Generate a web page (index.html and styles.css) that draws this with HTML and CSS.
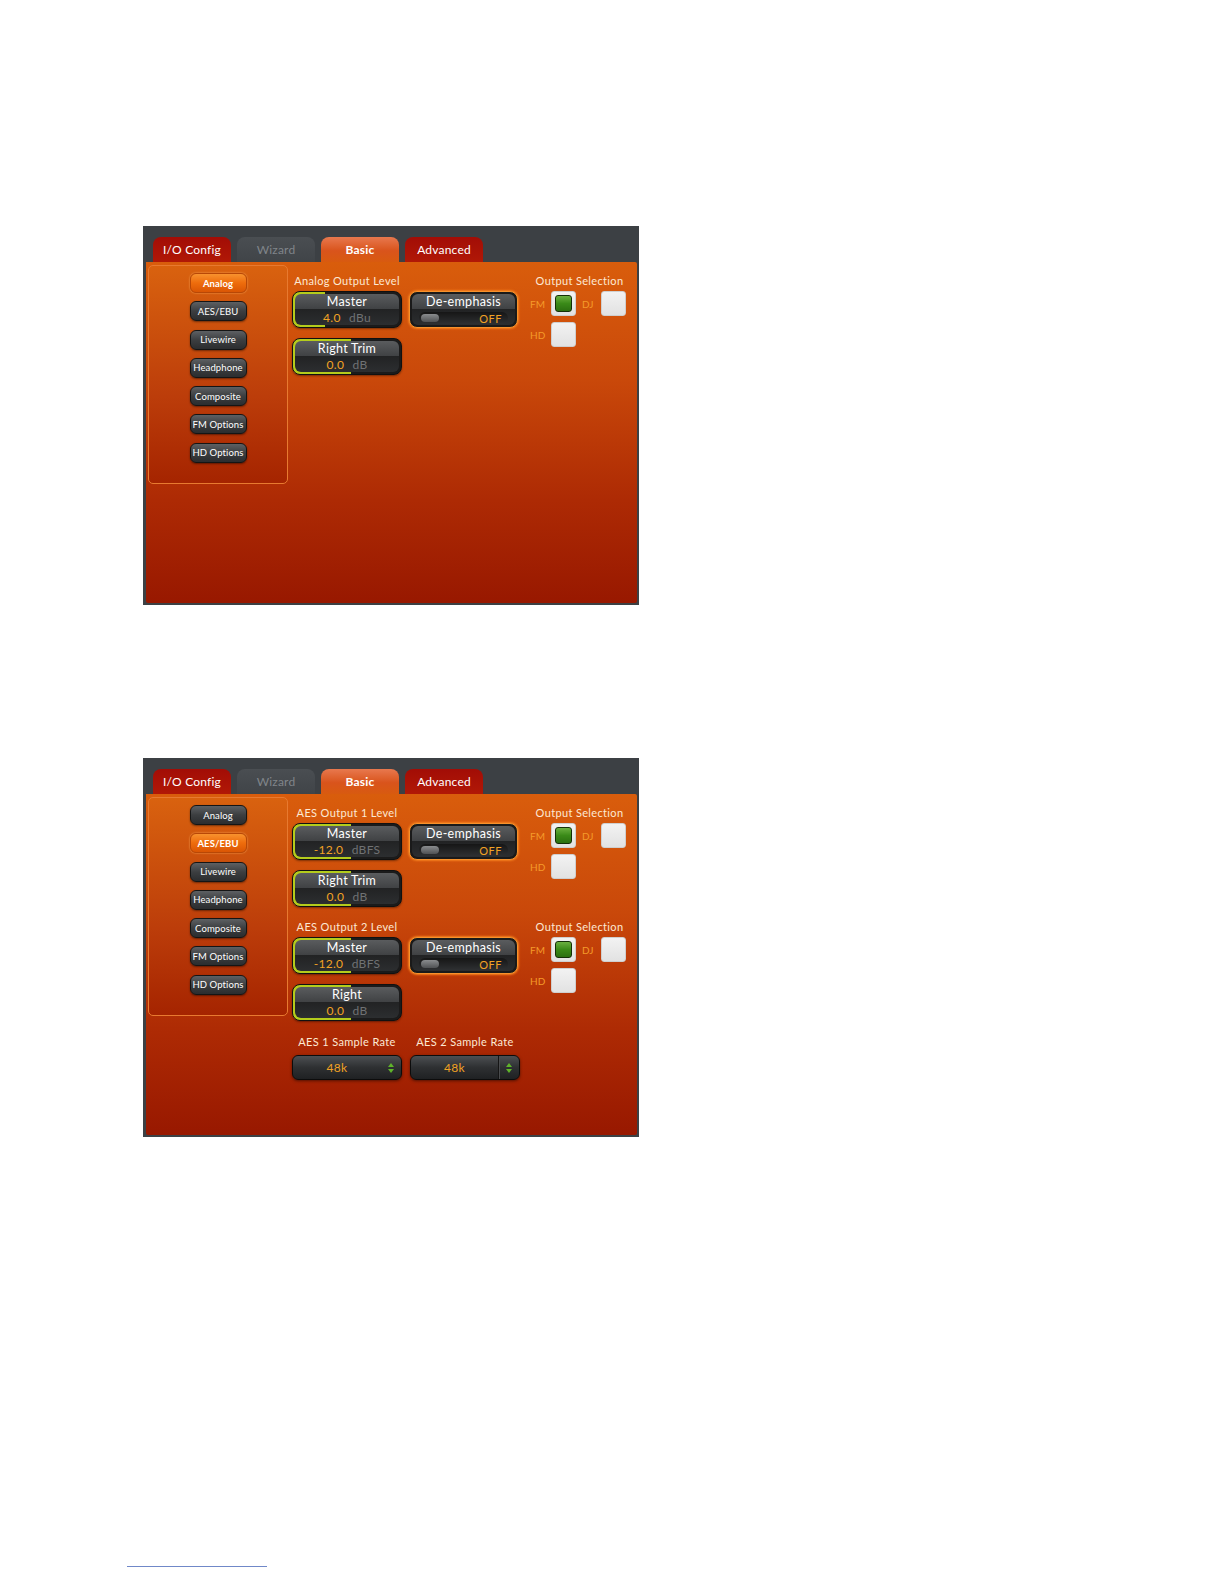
FILE: index.html
```html
<!DOCTYPE html>
<html lang="en">
<head>
    <meta charset="UTF-8">
    <title>Output Configuration</title>
    <link rel="stylesheet" href="styles.css">
</head>
<body>
    <div class="page">
        <!-- Analog output screen -->
        <div class="panel">
            <div class="tabs">
                <div class="tab">I/O Config</div>
                <div class="tab off">Wizard</div>
                <div class="tab active">Basic</div>
                <div class="tab">Advanced</div>
            </div>
            <div class="screen">
                <div class="nav">
                    <div class="nav-btn on">Analog</div>
                    <div class="nav-btn">AES/EBU</div>
                    <div class="nav-btn">Livewire</div>
                    <div class="nav-btn">Headphone</div>
                    <div class="nav-btn">Composite</div>
                    <div class="nav-btn">FM Options</div>
                    <div class="nav-btn">HD Options</div>
                </div>
                <div class="main">
                    <div class="group">
                        <div class="levels">
                            <div class="caption">Analog Output Level</div>
                            <div class="knob" style="--fill: 30%">
                                <div class="knob-in">
                                    <span class="knob-name">Master</span>
                                    <span class="knob-val"><b>4.0</b> dBu</span>
                                </div>
                            </div>
                            <div class="knob" style="--fill: 54%">
                                <div class="knob-in">
                                    <span class="knob-name">Right Trim</span>
                                    <span class="knob-val"><b>0.0</b> dB</span>
                                </div>
                            </div>
                        </div>
                        <div class="deemph">
                            <div class="deemph-in">
                                <span class="knob-name">De-emphasis</span>
                                <div class="toggle"><span class="toggle-knob"></span><span class="toggle-txt">OFF</span></div>
                            </div>
                        </div>
                        <div class="outsel">
                            <div class="caption">Output Selection</div>
                            <div class="outsel-grid">
                                <span class="ch">FM</span><span class="check on"><i></i></span>
                                <span class="ch dj">DJ</span><span class="check"></span>
                                <span class="ch">HD</span><span class="check"></span>
                            </div>
                        </div>
                    </div>
                </div>
            </div>
        </div>

        <!-- AES/EBU output screen -->
        <div class="panel">
            <div class="tabs">
                <div class="tab">I/O Config</div>
                <div class="tab off">Wizard</div>
                <div class="tab active">Basic</div>
                <div class="tab">Advanced</div>
            </div>
            <div class="screen">
                <div class="nav">
                    <div class="nav-btn">Analog</div>
                    <div class="nav-btn on">AES/EBU</div>
                    <div class="nav-btn">Livewire</div>
                    <div class="nav-btn">Headphone</div>
                    <div class="nav-btn">Composite</div>
                    <div class="nav-btn">FM Options</div>
                    <div class="nav-btn">HD Options</div>
                </div>
                <div class="main">
                    <div class="group">
                        <div class="levels">
                            <div class="caption">AES Output 1 Level</div>
                            <div class="knob" style="--fill: 54%">
                                <div class="knob-in">
                                    <span class="knob-name">Master</span>
                                    <span class="knob-val"><b>-12.0</b> dBFS</span>
                                </div>
                            </div>
                            <div class="knob" style="--fill: 54%">
                                <div class="knob-in">
                                    <span class="knob-name">Right Trim</span>
                                    <span class="knob-val"><b>0.0</b> dB</span>
                                </div>
                            </div>
                        </div>
                        <div class="deemph">
                            <div class="deemph-in">
                                <span class="knob-name">De-emphasis</span>
                                <div class="toggle"><span class="toggle-knob"></span><span class="toggle-txt">OFF</span></div>
                            </div>
                        </div>
                        <div class="outsel">
                            <div class="caption">Output Selection</div>
                            <div class="outsel-grid">
                                <span class="ch">FM</span><span class="check on"><i></i></span>
                                <span class="ch dj">DJ</span><span class="check"></span>
                                <span class="ch">HD</span><span class="check"></span>
                            </div>
                        </div>
                    </div>
                    <div class="group second">
                        <div class="levels">
                            <div class="caption">AES Output 2 Level</div>
                            <div class="knob" style="--fill: 54%">
                                <div class="knob-in">
                                    <span class="knob-name">Master</span>
                                    <span class="knob-val"><b>-12.0</b> dBFS</span>
                                </div>
                            </div>
                            <div class="knob" style="--fill: 54%">
                                <div class="knob-in">
                                    <span class="knob-name">Right</span>
                                    <span class="knob-val"><b>0.0</b> dB</span>
                                </div>
                            </div>
                        </div>
                        <div class="deemph">
                            <div class="deemph-in">
                                <span class="knob-name">De-emphasis</span>
                                <div class="toggle"><span class="toggle-knob"></span><span class="toggle-txt">OFF</span></div>
                            </div>
                        </div>
                        <div class="outsel">
                            <div class="caption">Output Selection</div>
                            <div class="outsel-grid">
                                <span class="ch">FM</span><span class="check on"><i></i></span>
                                <span class="ch dj">DJ</span><span class="check"></span>
                                <span class="ch">HD</span><span class="check"></span>
                            </div>
                        </div>
                    </div>
                    <div class="rates">
                        <div class="rate">
                            <div class="caption">AES 1 Sample Rate</div>
                            <div class="select">
                                <span class="select-val">48k</span>
                                <span class="spin"><i class="up"></i><i class="down"></i></span>
                            </div>
                        </div>
                        <div class="rate">
                            <div class="caption">AES 2 Sample Rate</div>
                            <div class="select split">
                                <span class="select-val">48k</span>
                                <span class="spin"><i class="up"></i><i class="down"></i></span>
                            </div>
                        </div>
                    </div>
                </div>
            </div>
        </div>
    </div>
    <div class="rule"></div>
</body>
</html>
```

FILE: styles.css
```css
body {
    margin: 0;
    background: #fff;
    font-family: Lato, "Open Sans", sans-serif;
}
.page {
    padding: 226px 0 0 143px;
    display: flex;
    flex-direction: column;
    gap: 153px;
}
.rule {
    width: 140px;
    height: 1px;
    margin: 429px 0 0 127px;
    background: #7088c8;
}

/* frame + tabs */
.panel {
    width: 496px;
    height: 379px;
    box-sizing: border-box;
    background: #3c4044;
    padding: 0 2px 2px 3px;
    display: flex;
    flex-direction: column;
}
.tabs {
    display: flex;
    gap: 6px;
    height: 36px;
    box-sizing: border-box;
    padding: 11px 0 0 7px;
}
.tab {
    width: 78px;
    height: 25px;
    border-radius: 8px 8px 0 0;
    display: flex;
    align-items: center;
    justify-content: center;
    font-size: 12px;
    letter-spacing: 0.2px;
    color: #fff;
    background: linear-gradient(#a20d06, #b11806);
}
.tab.off {
    background: linear-gradient(#4a4e52, #404448);
    color: #80858a;
}
.tab.active {
    background: linear-gradient(#e8784e, #d9541c 55%, #d85a10);
    font-weight: bold;
}
.screen {
    flex: 1;
    display: flex;
    gap: 4px;
    padding: 3px 0 0 2px;
    border-radius: 0 2px 2px 2px;
    background: linear-gradient(#d95d0c 0%, #c9480a 35%, #ad2a04 70%, #981800 100%);
}

/* left menu */
.nav {
    width: 140px;
    height: 219px;
    box-sizing: border-box;
    border: 1px solid #e87a30;
    border-radius: 5px;
    padding: 7px 0;
    display: flex;
    flex-direction: column;
    align-items: center;
    gap: 8.3px;
    background: linear-gradient(#d9620f, #bc3d0a 60%, #a52400);
}
.nav-btn {
    width: 57px;
    height: 20px;
    box-sizing: border-box;
    border: 1px solid #151515;
    border-radius: 6px;
    background: linear-gradient(#5d6063, #3c3e40 50%, #2b2d2f);
    color: #fff;
    font-size: 9.5px;
    letter-spacing: 0.1px;
    display: flex;
    align-items: center;
    justify-content: center;
    box-shadow: 0 1px 2px rgba(0, 0, 0, 0.45);
}
.nav-btn.on {
    background: linear-gradient(#f8922e, #ee6c0c 50%, #da5604);
    border-color: #b84806;
    font-weight: bold;
    box-shadow: 0 0 2px #ffb060;
}

/* controls */
.main {
    padding-top: 10px;
    display: flex;
    flex-direction: column;
}
.group {
    display: flex;
}
.group.second {
    margin-top: 14px;
}
.caption {
    font-size: 11px;
    line-height: 12px;
    letter-spacing: 0.35px;
    color: #fde9d4;
    text-align: center;
    margin-bottom: 4px;
    white-space: nowrap;
}
.levels {
    width: 110px;
    display: flex;
    flex-direction: column;
    gap: 10px;
}
.levels .caption {
    margin-bottom: -6px;
}
.knob {
    height: 37px;
    box-sizing: border-box;
    padding: 2px;
    border-radius: 8px;
    border: 1px solid #111;
    background: linear-gradient(to right, #b4cc1c var(--fill), #1b1b1b var(--fill));
    box-shadow: 0 1px 2px rgba(0, 0, 0, 0.4);
}
.knob-in,
.deemph-in {
    height: 100%;
    box-sizing: border-box;
    border-radius: 6px;
    display: flex;
    flex-direction: column;
    align-items: center;
    background: linear-gradient(#5a5c5e, #404244 48%, #222324 50%, #2c2e30);
}
.knob-name {
    font-size: 12.5px;
    line-height: 16px;
    letter-spacing: 0.3px;
    color: #fff;
}
.knob-val {
    font-size: 12px;
    line-height: 16px;
    letter-spacing: 0.3px;
    color: #707274;
    word-spacing: 5px;
}
.knob-val b {
    font-weight: normal;
    color: #f2a224;
}
.deemph {
    width: 109px;
    height: 37px;
    box-sizing: border-box;
    margin: 16px 0 0 7px;
    padding: 2px;
    border-radius: 8px;
    border: 1px solid #f7922c;
    background: #1a1a1a;
    box-shadow: 0 0 2px 1px #f57e1e;
}
.deemph-in {
    padding: 0 7px;
    align-items: stretch;
    text-align: center;
}
.toggle {
    height: 12px;
    margin-top: 2px;
    border-radius: 6px;
    background: linear-gradient(#161616, #2e3032);
    display: flex;
    align-items: center;
    justify-content: space-between;
    padding: 0 6px 0 2px;
}
.toggle-knob {
    width: 18px;
    height: 8px;
    border-radius: 4px;
    background: linear-gradient(#8a8c8e, #505254);
}
.toggle-txt {
    font-size: 11px;
    letter-spacing: 0.5px;
    color: #f2a224;
}

/* output selection */
.outsel {
    width: 99px;
    margin-left: 12px;
}
.outsel-grid {
    display: grid;
    grid-template-columns: 21px 25px 25px 25px;
    grid-auto-rows: 25px;
    row-gap: 6px;
    align-items: center;
}
.ch {
    font-size: 10px;
    color: #f49a2a;
}
.ch.dj {
    padding-left: 6px;
}
.check {
    width: 25px;
    height: 25px;
    box-sizing: border-box;
    border: 1px solid #cfcfcf;
    border-radius: 3px;
    background: linear-gradient(#f2f2f2, #e2e2e2);
    display: flex;
    align-items: center;
    justify-content: center;
}
.check i {
    width: 17px;
    height: 17px;
    box-sizing: border-box;
    border: 1px solid #143008;
    border-radius: 3px;
    background: linear-gradient(#6ab040, #3a8a18 50%, #2b7010);
}

/* sample rates */
.rates {
    display: flex;
    gap: 8px;
    margin-top: 15px;
}
.rate {
    width: 110px;
}
.rate .caption {
    margin-bottom: 7px;
}
.select {
    height: 25px;
    box-sizing: border-box;
    border: 1px solid #0c0c0c;
    border-radius: 6px;
    background: linear-gradient(#4c4f52, #2e3032 50%, #1f2123);
    display: flex;
    align-items: center;
    box-shadow: 0 1px 3px rgba(0, 0, 0, 0.5);
}
.select-val {
    flex: 1;
    text-align: center;
    font-size: 12px;
    letter-spacing: 0.3px;
    color: #f2a224;
}
.spin {
    width: 20px;
    height: 100%;
    display: flex;
    flex-direction: column;
    align-items: center;
    justify-content: center;
    gap: 2px;
}
.select.split .spin {
    border-left: 1px solid #151515;
    box-shadow: inset 1px 0 0 #4a4c4e;
}
.spin i {
    width: 0;
    height: 0;
    border-left: 3px solid transparent;
    border-right: 3px solid transparent;
}
.spin .up {
    border-bottom: 4px solid #5fb42a;
}
.spin .down {
    border-top: 4px solid #5fb42a;
}
```
